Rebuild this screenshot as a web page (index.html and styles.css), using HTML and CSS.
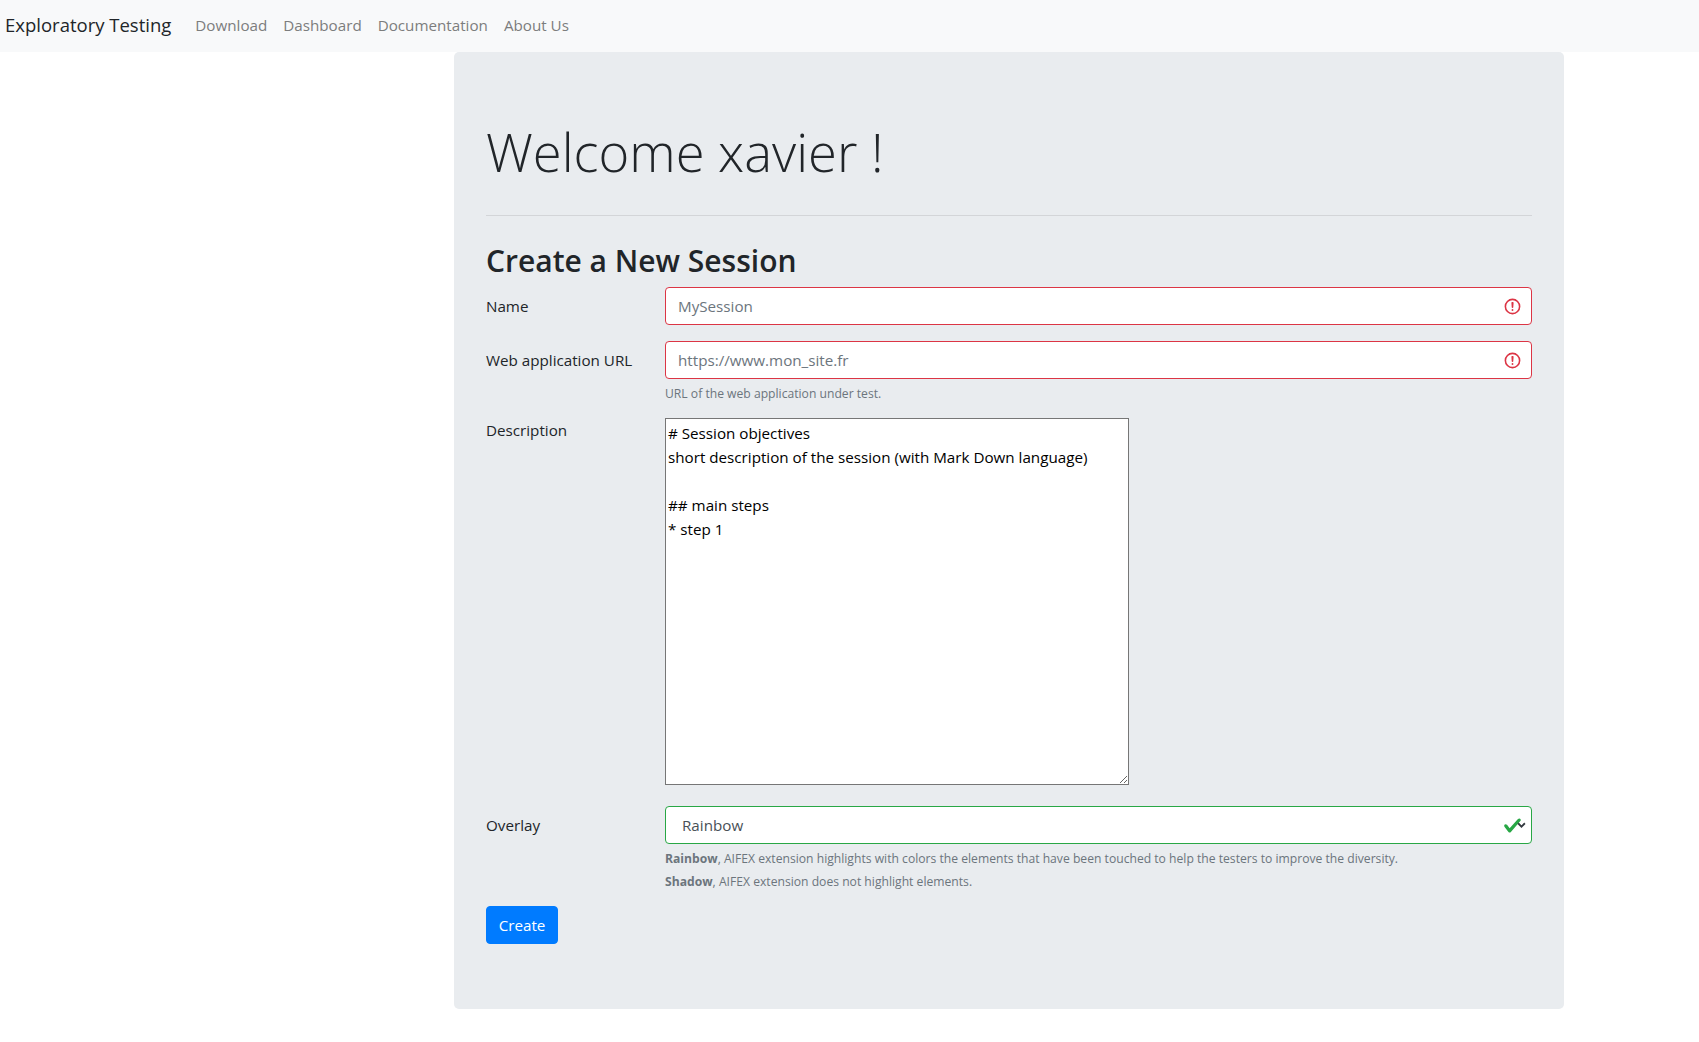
FILE: index.html
```html
<!DOCTYPE html>
<html>
<head>
    <title>Exploratory Testing</title>
    <link rel="stylesheet" href="styles.css">
</head>
<body>
    <nav class="navbar">
        <a class="brand" href="#">Exploratory Testing</a>
        <a class="nav-link" href="#">Download</a>
        <a class="nav-link" href="#">Dashboard</a>
        <a class="nav-link" href="#">Documentation</a>
        <a class="nav-link" href="#">About Us</a>
    </nav>
    <main class="jumbotron">
        <h1 class="welcome">Welcome xavier !</h1>
        <hr class="divider">
        <h2 class="form-title">Create a New Session</h2>
        <form class="session-form">
            <div class="form-row">
                <label for="name">Name</label>
                <div class="field">
                    <input class="control invalid" type="text" id="name" placeholder="MySession">
                </div>
            </div>
            <div class="form-row">
                <label for="url">Web application URL</label>
                <div class="field">
                    <input class="control invalid" type="text" id="url" placeholder="https://www.mon_site.fr">
                    <small class="help">URL of the web application under test.</small>
                </div>
            </div>
            <div class="form-row">
                <label class="label-top" for="description">Description</label>
                <div class="field">
                    <textarea class="description" id="description"># Session objectives
short description of the session (with Mark Down language)

## main steps
* step 1</textarea>
                </div>
            </div>
            <div class="form-row">
                <label for="overlay">Overlay</label>
                <div class="field">
                    <select class="control valid-select" id="overlay">
                        <option>Rainbow</option>
                        <option>Shadow</option>
                    </select>
                    <small class="help"><b>Rainbow</b>, AIFEX extension highlights with colors the elements that have been touched to help the testers to improve the diversity.</small>
                    <small class="help"><b>Shadow</b>, AIFEX extension does not highlight elements.</small>
                </div>
            </div>
            <button class="btn-create" type="button">Create</button>
        </form>
    </main>
</body>
</html>
```

FILE: styles.css
```css
* {
    box-sizing: border-box;
}
body {
    font-family: "Open Sans", "Noto Sans", sans-serif;
    font-size: 15.2px;
    line-height: 24px;
    color: #212529;
    background-color: #ffffff;
    margin: 0;
}
.navbar {
    display: flex;
    align-items: center;
    height: 52px;
    padding: 0 5px 3px;
    background-color: #f8f9fa;
}
.brand {
    font-size: 18.5px;
    color: #212529;
    text-decoration: none;
    margin-right: 16px;
}
.nav-link {
    color: #7c7d7d;
    text-decoration: none;
    padding: 0 8px;
}
.jumbotron {
    width: 1110px;
    height: 957px;
    margin-left: 454px;
    padding: 64px 32px 0;
    background-color: #e9ecef;
    border-radius: 5px;
}
.welcome {
    margin: 0;
    font-size: 52.5px;
    font-weight: 300;
    line-height: 72px;
}
.divider {
    margin: 27px 0 0;
    border: 0;
    border-top: 1px solid #d3d5d8;
}
.form-title {
    margin: 25px 0 6px;
    font-size: 30px;
    font-weight: 600;
    line-height: 40px;
}
.form-row {
    display: grid;
    grid-template-columns: 179px 867px;
    margin-bottom: 16px;
}
.form-row label {
    padding-top: 7px;
}
.form-row .label-top {
    padding-top: 0;
}
.control {
    display: block;
    width: 100%;
    height: 38px;
    padding: 6px 12px;
    font-family: inherit;
    font-size: 15.2px;
    color: #495057;
    background-color: #ffffff;
    border-radius: 4px;
    outline: none;
}
.control::placeholder {
    color: #6c757d;
}
.invalid {
    border: 1px solid #dc3545;
    background-image: url("data:image/svg+xml,%3csvg xmlns='http://www.w3.org/2000/svg' width='12' height='12' fill='none' stroke='%23dc3545' viewBox='0 0 12 12'%3e%3ccircle cx='6' cy='6' r='4.5'/%3e%3cpath stroke-linejoin='round' d='M5.8 3.6h.4L6 6.5z'/%3e%3ccircle cx='6' cy='8.2' r='.6' fill='%23dc3545' stroke='none'/%3e%3c/svg%3e");
    background-repeat: no-repeat;
    background-position: right 9px center;
    background-size: 19px 19px;
}
.valid-select {
    appearance: none;
    border: 1px solid #28a745;
    padding-left: 16px;
    background-image: url("data:image/svg+xml,%3csvg xmlns='http://www.w3.org/2000/svg' width='8' height='8' viewBox='0 0 8 8'%3e%3cpolyline points='1,2 4,5 7,2' fill='none' stroke='%23343a40' stroke-width='1.6'/%3e%3c/svg%3e"), url("data:image/svg+xml,%3csvg xmlns='http://www.w3.org/2000/svg' width='8' height='8' viewBox='0 0 8 8'%3e%3cpath fill='%2328a745' d='M2.3 6.73L.6 4.53c-.4-1.04.46-1.4 1.1-.8l1.1 1.4 3.4-3.8c.6-.63 1.6-.27 1.2.7l-4 4.6c-.43.5-.8.4-1.1.1z'/%3e%3c/svg%3e");
    background-repeat: no-repeat;
    background-position: right 5px center, right 9px center;
    background-size: 9px 9px, 19px 19px;
}
.help {
    display: block;
    margin-top: 6px;
    font-size: 12.15px;
    line-height: 17px;
    color: #6c757d;
}
.description {
    display: block;
    width: 464px;
    height: 367px;
    margin-bottom: 5px;
    padding: 2px;
    font-family: inherit;
    font-size: 15.2px;
    line-height: 24px;
    color: #000000;
    background-color: #ffffff;
    border: 1px solid #767676;
    outline: none;
}
.btn-create {
    display: block;
    width: 72px;
    height: 38px;
    padding: 0;
    font-family: inherit;
    font-size: 15.2px;
    color: #ffffff;
    background-color: #007bff;
    border: 1px solid #007bff;
    border-radius: 4px;
    cursor: pointer;
}
```
